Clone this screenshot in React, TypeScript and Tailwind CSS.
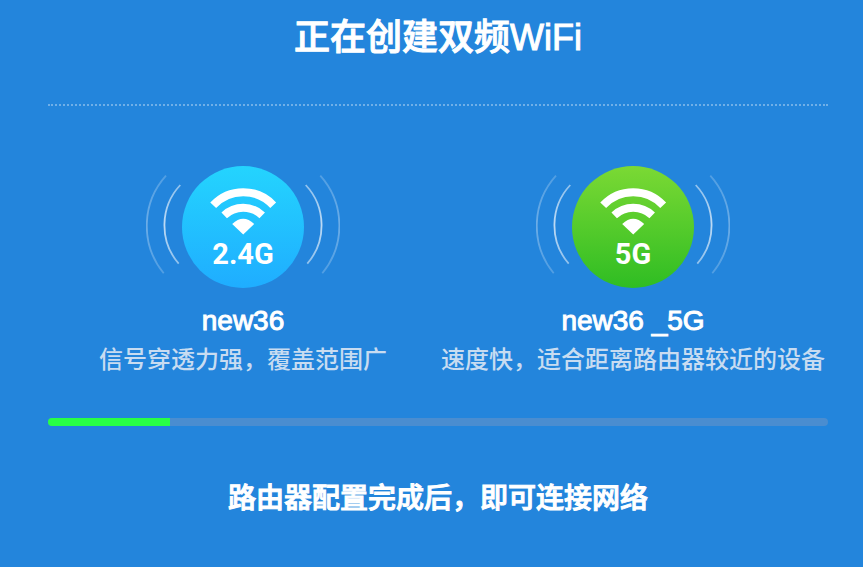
type Band = {
  id: string;
  label: string;
  name: string;
  hint: string;
  from: string;
  to: string;
};

const bands: Band[] = [
  { id: "b24", label: "2.4G", name: "new36", hint: "信号穿透力强，覆盖范围广", from: "#24d4fe", to: "#1fadff" },
  { id: "b5", label: "5G", name: "new36 _5G", hint: "速度快，适合距离路由器较近的设备", from: "#7bd934", to: "#2fbd23" },
];

function BandIcon({ band }: { band: Band }) {
  const disc = band.id + "-disc";
  const wave = band.id + "-wave";
  return (
    <svg width="194" height="122" viewBox="0 0 194 122" role="img" aria-label={band.label + " WiFi"}>
      <defs>
        <linearGradient id={disc} x1="0" y1="0" x2="0" y2="1">
          <stop offset="0" stopColor={band.from} />
          <stop offset="1" stopColor={band.to} />
        </linearGradient>
        <linearGradient id={wave} gradientUnits="userSpaceOnUse" x1="0" y1="5" x2="0" y2="112">
          <stop offset="0" stopColor="#fff" stopOpacity="0.6" />
          <stop offset="0.5" stopColor="#fff" stopOpacity="1" />
          <stop offset="1" stopColor="#fff" stopOpacity="0.6" />
        </linearGradient>
      </defs>
      <g fill="none" stroke={"url(#" + wave + ")"} strokeWidth="1.8">
        <g opacity="0.7">
          <path d="M34.3 19A59 59 0 0 0 32.7 97.7" />
          <path d="M159.7 19A59 59 0 0 1 161.3 97.7" />
        </g>
        <g opacity="0.33">
          <path d="M20 9.7A75 75 0 0 0 17.7 107.3" />
          <path d="M174.3 9.7A75 75 0 0 1 176.3 107.3" />
        </g>
      </g>
      <circle cx="97" cy="61" r="61" fill={"url(#" + disc + ")"} />
      <g fill="none" stroke="#fff" strokeWidth="8">
        <path d="M67.2 39.2A41 41 0 0 1 127.2 39.2" />
        <path d="M78.2 49.4A27.5 27.5 0 0 1 116.2 49.4" />
      </g>
      <path d="M86.2 58Q97.2 47.4 108.2 58L97.2 68.6Z" fill="#fff" />
      <text
        x="97"
        y="98"
        textAnchor="middle"
        fill="#fff"
        className="font-[Roboto,sans-serif] text-[29px] font-bold"
      >
        {band.label}
      </text>
    </svg>
  );
}

export default function App() {
  return (
    <main
      lang="zh-CN"
      className="min-h-screen bg-[#2385dc] pr-[35px] pl-12 pt-3 pb-10 text-center font-['Liberation_Sans','Noto_Sans_CJK_SC',sans-serif] font-medium text-white"
    >
      <h1 className="text-4xl leading-[52px] [-webkit-text-stroke:1px_white]">正在创建双频WiFi</h1>
      <hr className="mt-10 border-0 border-t-2 border-dotted border-white/35" />
      <section className="mt-15 grid grid-cols-2">
        {bands.map((band) => (
          <article key={band.id} className="flex flex-col items-center">
            <BandIcon band={band} />
            <h2 className="mt-3 text-[28px] leading-[42px] [-webkit-text-stroke:1px_white]">{band.name}</h2>
            <p className="text-2xl leading-9 whitespace-nowrap text-[#c8dcf1]">{band.hint}</p>
          </article>
        ))}
      </section>
      <div
        role="progressbar"
        aria-label="路由器配置"
        aria-valuemin={0}
        aria-valuemax={1000}
        aria-valuenow={156}
        className="mt-10 h-2 overflow-hidden rounded-full bg-[#4a8dd0]"
      >
        <div className="h-full w-[15.6%] bg-[#28ff46]" />
      </div>
      <p className="mt-[52px] text-[28px] leading-[42px] [-webkit-text-stroke:1px_white]">
        路由器配置完成后，即可连接网络
      </p>
    </main>
  );
}
